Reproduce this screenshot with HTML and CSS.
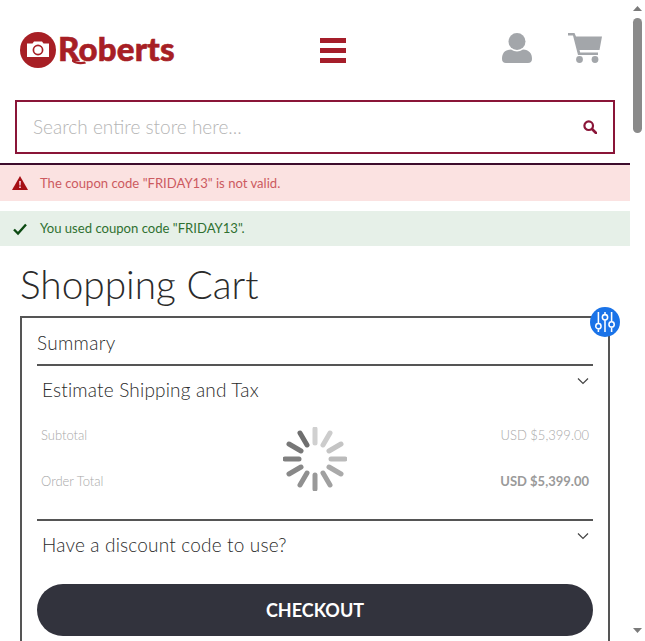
FILE: index.html
```html
<!DOCTYPE html>
<html lang="en">
<head>
<meta charset="utf-8">
<title>Shopping Cart</title>
<link rel="stylesheet" href="styles.css">
</head>
<body>
<div class="page">
  <main class="content">
    <header class="header">
      <a class="logo">
        <svg class="logo-mark" viewBox="0 0 36 36" width="36" height="36">
          <circle cx="18" cy="18" r="18" fill="#a71f25"/>
          <path d="M7 11.500h5.500l1.500-2h8l1.500 2h5.500v13.500h-22z" fill="#fff"/>
          <circle cx="18" cy="18" r="4.600" fill="#fff" stroke="#a71f25" stroke-width="1.700"/>
        </svg>
        <span class="logo-text">Roberts</span>
        <svg class="logo-tail" width="14" height="6" viewBox="0 0 14 6"><path d="M0 0c3 2.500 7 3.500 13 2.500l1 2c-6 1.500-11 .5-14-2z" fill="#a71f25"/></svg>
      </a>
      <div class="burger"><i></i><i></i><i></i></div>
      <div class="header-icons">
        <svg width="32" height="30" viewBox="0 0 32 30"><circle cx="16" cy="8.500" r="8.500" fill="#a3a6aa"/><path d="M1 26c0-6 3-9 9-9.500 2 1.300 4 2 6 2s4-.7 6-2c6 .5 9 3.500 9 9.500 0 2.500-1.500 4-4 4H5c-2.500 0-4-1.500-4-4z" fill="#a3a6aa"/></svg>
        <svg width="34" height="30" viewBox="0 0 34 30"><path d="M0 0h6.500l1.500 3.500H34l-2.500 13.500H11.500l.7 2.500H30v2.500H10L5 2.500H0z" fill="#a3a6aa"/><circle cx="11.500" cy="26.500" r="3.400" fill="#a3a6aa"/><circle cx="27" cy="26.500" r="3.400" fill="#a3a6aa"/></svg>
      </div>
    </header>
    <form class="search">
      <span class="search-placeholder">Search entire store here...</span>
      <svg width="14" height="14" viewBox="0 0 14 14"><circle cx="5.700" cy="5.700" r="4.300" fill="none" stroke="#8a1538" stroke-width="2.200"/><path d="M9 9l4 4" stroke="#8a1538" stroke-width="2.600" stroke-linecap="round"/></svg>
    </form>
    <div class="msg msg-error">
      <svg width="16" height="14" viewBox="0 0 16 14"><path d="M8 0l8 14H0z" fill="#a50f14"/><path d="M7.200 5h1.600l-.2 4.500H7.400zM7.200 10.500h1.600V12H7.200z" fill="#fde"/></svg>
      <span>The coupon code "FRIDAY13" is not valid.</span>
    </div>
    <div class="msg msg-success">
      <svg width="16" height="14" viewBox="0 0 16 14"><path d="M2 7.500l4 4L14 2.500" fill="none" stroke="#0c4a12" stroke-width="2.400"/></svg>
      <span>You used coupon code "FRIDAY13".</span>
    </div>
    <h1 class="title">Shopping Cart</h1>
    <section class="card">
      <span class="badge">
        <svg width="20" height="20" viewBox="0 0 20 20" fill="none" stroke="#fff" stroke-width="1.400"><path d="M4 1v10M4 16.500V19M10 1v2M10 8.500V19M16 1v8.500M16 15v4"/><circle cx="4" cy="13.800" r="2.400"/><circle cx="10" cy="5.700" r="2.400"/><circle cx="16" cy="12.200" r="2.400"/></svg>
      </span>
      <h2 class="summary">Summary</h2>
      <div class="block">
        <div class="toggle"><span>Estimate Shipping and Tax</span><svg class="chev" width="12" height="8" viewBox="0 0 12 8"><path d="M1 1.500l5 5 5-5" fill="none" stroke="#444" stroke-width="1.200"/></svg></div>
      </div>
      <div class="totals">
        <div class="row"><span>Subtotal</span><span>USD $5,399.00</span></div>
        <div class="row row-total"><span>Order Total</span><strong>USD $5,399.00</strong></div>
        <svg class="spinner" width="64" height="64" viewBox="0 0 64 64" stroke-width="5" stroke-linecap="round">
          <path d="M32 2v14" stroke="#d0d0d0"/>
          <path d="M47 6l-7 12" stroke="#cccccc"/>
          <path d="M58 17l-12 7" stroke="#c4c4c4"/>
          <path d="M62 32H48" stroke="#bbbbbb"/>
          <path d="M58 47l-12-7" stroke="#aaaaaa"/>
          <path d="M47 58l-7-12" stroke="#a0a0a0"/>
          <path d="M32 62V48" stroke="#999999"/>
          <path d="M17 58l7-12" stroke="#909090"/>
          <path d="M6 47l12-7" stroke="#888888"/>
          <path d="M2 32h14" stroke="#808080"/>
          <path d="M6 17l12 7" stroke="#777777"/>
          <path d="M17 6l7 12" stroke="#6e6e6e"/>
        </svg>
      </div>
      <div class="block">
        <div class="toggle"><span>Have a discount code to use?</span><svg class="chev" width="12" height="8" viewBox="0 0 12 8"><path d="M1 1.500l5 5 5-5" fill="none" stroke="#444" stroke-width="1.200"/></svg></div>
      </div>
      <button class="checkout" type="button">CHECKOUT</button>
    </section>
  </main>
  <aside class="scrollbar">
    <svg width="9" height="5" viewBox="0 0 9 5"><path d="M4.500 0l4.500 5H0z" fill="#7a7a7a"/></svg>
    <div class="thumb"></div>
    <svg class="arrow-down" width="9" height="5" viewBox="0 0 9 5"><path d="M0 0h9L4.500 5z" fill="#7a7a7a"/></svg>
  </aside>
</div>
</body>
</html>
```
FILE: styles.css
```css
* { box-sizing: border-box; }
html, body { margin: 0; height: 100%; overflow: hidden; background: #fff; }
body { font-family: "Lato", "Open Sans", sans-serif; color: #333; }
.page { display: flex; height: 641px; overflow: hidden; }
.content { flex: 1; min-width: 0; }
.header { height: 100px; padding: 0 28px 0 20px; display: flex; align-items: center; }
.logo { position: relative; display: flex; align-items: center; width: 300px; gap: 2px; }
.logo-text { font-family: "Lato", sans-serif; font-weight: 900; font-size: 33px; color: #a71f25; letter-spacing: .2px; line-height: 36px; margin-top: -5px; -webkit-text-stroke: .6px #a71f25; }
.logo-tail { position: absolute; left: 52px; top: 27px; }
.burger { display: flex; flex-direction: column; gap: 5px; width: 26px; }
.burger i { display: block; height: 5px; background: #a51e2a; }
.header-icons { margin-left: auto; margin-bottom: 4px; display: flex; gap: 35px; }
.search { height: 54px; margin: 0 15px; border: 2px solid #8a1538; display: flex; align-items: center; justify-content: space-between; padding: 0 16px 0 16px; }
.search-placeholder { font-size: 19px; font-weight: 300; color: #b5b5b5; position: relative; top: -1px; }
.msg { display: flex; align-items: center; gap: 12px; padding-left: 12px; font-size: 13.100px; font-weight: 400; line-height: 16px; }
.msg span { margin-top: -1px; }
.msg-error { margin-top: 9px; height: 38px; background: #fbe2e1; border-top: 2px solid #3d0c2c; color: #cc5a60; }
.msg-success { margin-top: 10px; height: 35px; background: #e6f0e8; color: #2f7031; }
.title { margin: 20px 0 0 20px; height: 50px; font-size: 38.800px; font-weight: 300; line-height: 36px; color: #2b2b2b; }
.card { position: relative; margin: 0 20px; border: 2px solid #555; border-bottom: 0; padding: 0 15px; height: 325px; }
.badge { position: absolute; top: -11px; right: -12px; width: 30px; height: 30px; border-radius: 50%; background: #1a73e8; display: flex; align-items: center; justify-content: center; }
.badge svg { width: 22px; height: 22px; }
.summary { margin: 0; height: 48px; padding-top: 12px; font-size: 19px; font-weight: 300; line-height: 25px; letter-spacing: .3px; color: #2b2b2b; border-bottom: 2px solid #555; }
.toggle { position: relative; padding: 11px 5px 0; font-size: 19px; font-weight: 300; line-height: 26px; letter-spacing: .18px; height: 49px; color: #2b2b2b; }
.chev { position: absolute; right: 4px; top: 11px; }
.totals { position: relative; height: 106px; padding: 0 4px; border-bottom: 2px solid #555; }
.row { display: flex; justify-content: space-between; font-size: 13px; color: #a8a8a8; height: 46px; padding-top: 11px; line-height: 18px; font-weight: 300; }
.row-total strong { font-weight: 700; color: #9a9a9a; }
.spinner { position: absolute; left: 246px; top: 12px; }
.checkout { display: block; width: 100%; height: 52px; margin-top: 14px; padding-bottom: 2px; border: 0; border-radius: 26px; background: #32333d; color: #fff; font-family: inherit; font-size: 18px; font-weight: 700; }
.scrollbar { width: 15px; flex: none; display: flex; flex-direction: column; align-items: center; padding: 6px 0 8px; background: #fff; }
.thumb { width: 9px; height: 115px; margin-top: 7px; border-radius: 5px; background: #8a8a8a; }
.arrow-down { margin-top: auto; }
```
